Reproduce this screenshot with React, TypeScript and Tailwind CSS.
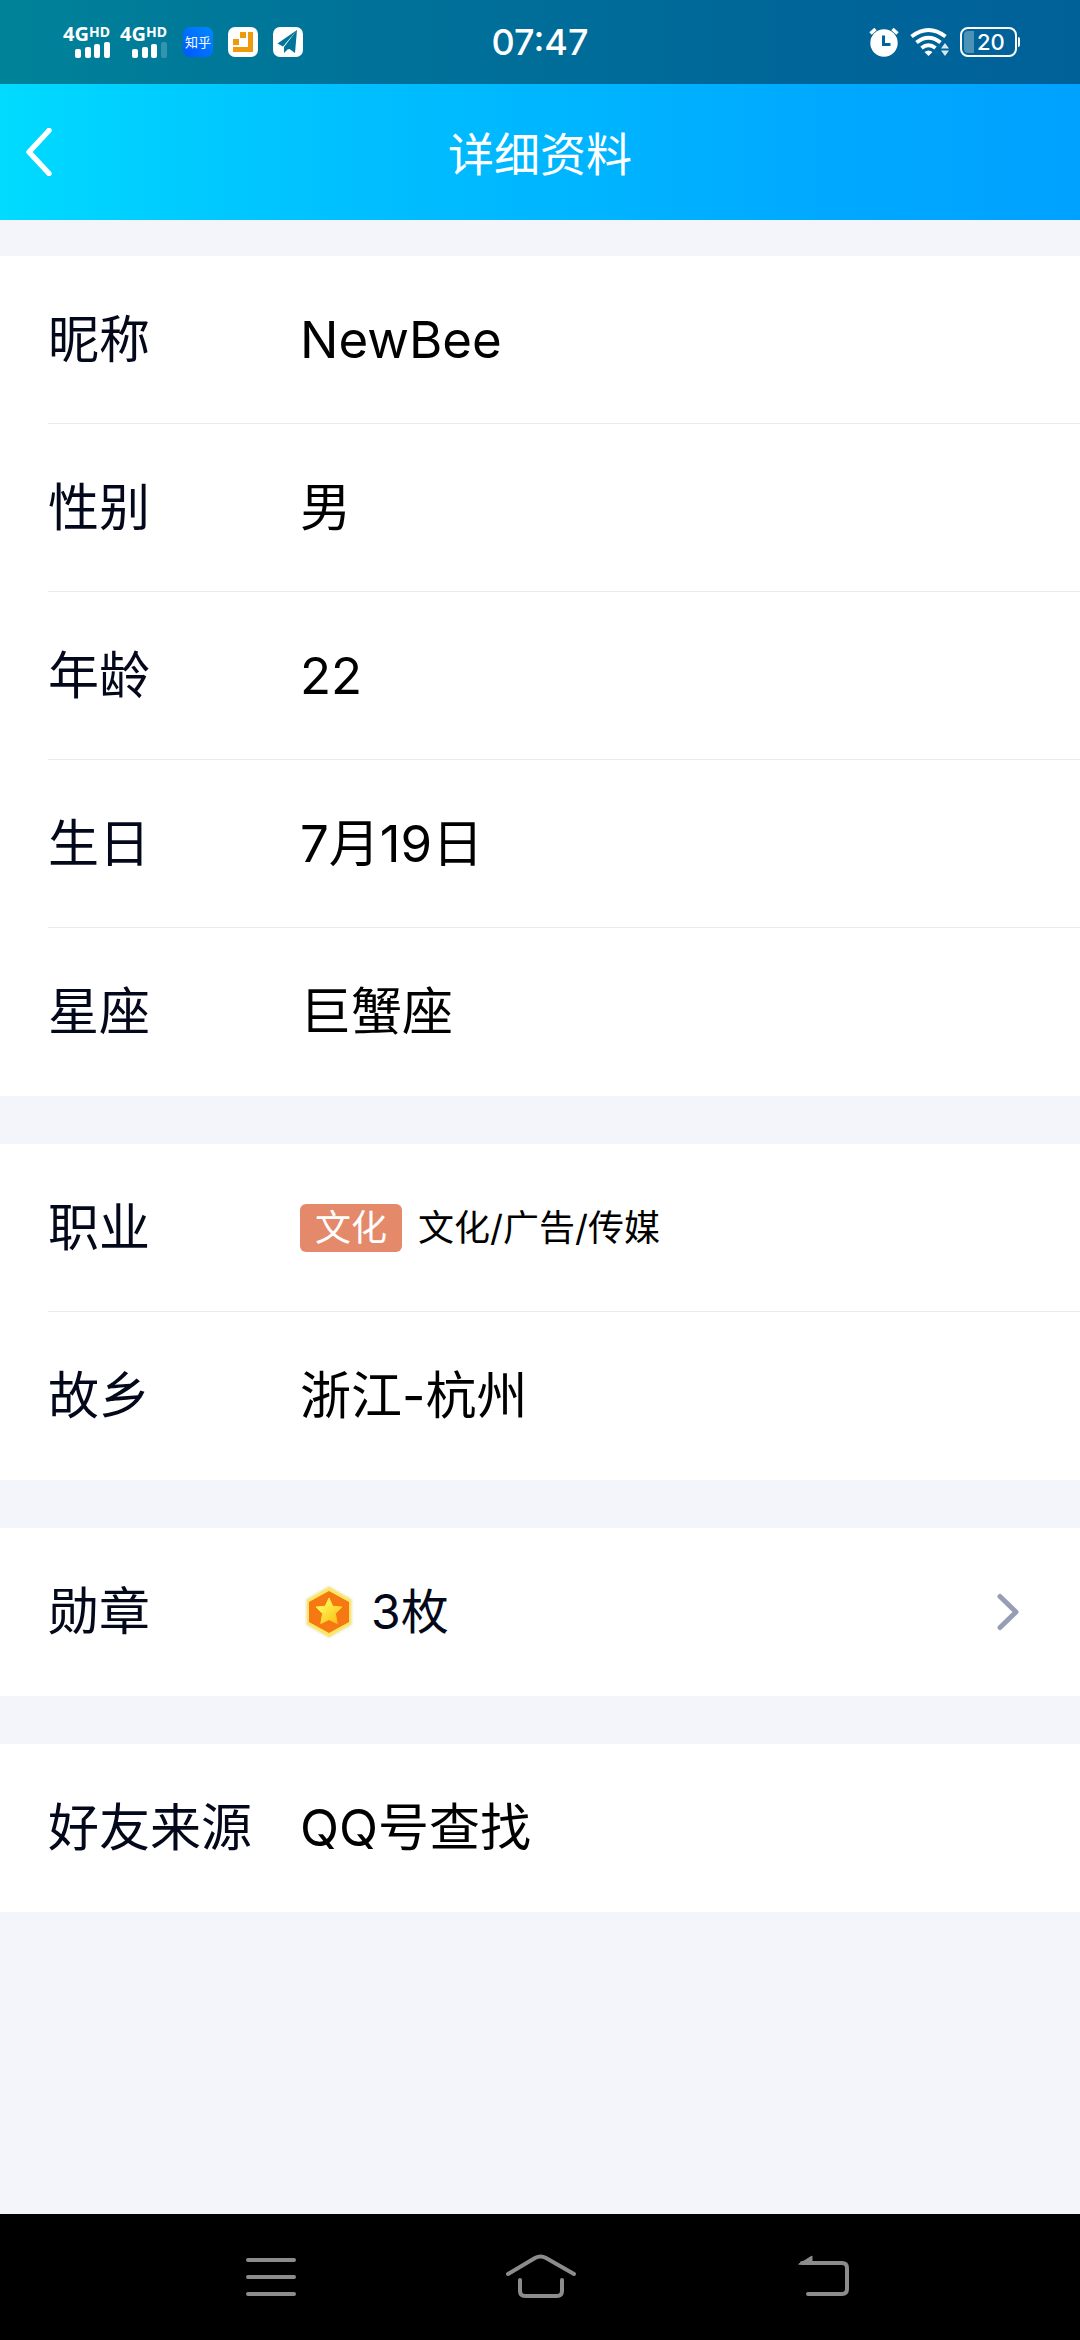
import type { ReactNode } from "react";

function SignalStatus({ faded = false }: { faded?: boolean }) {
  return (
    <div className="flex w-12 flex-col">
      <div className="flex h-4 items-start font-bold text-white">
        <span className="font-['Noto_Sans'] text-[20px] leading-4">4G</span>
        <span className="font-['Noto_Sans'] text-[14px] leading-3">HD</span>
      </div>
      <svg className="ml-3 h-4 w-9" viewBox="0 0 36 16" fill="#fff" aria-hidden="true">
        <rect x="0" y="7" width="6" height="9" rx="2" />
        <rect x="10" y="5" width="6" height="11" rx="2" />
        <rect x="19" y="2" width="6" height="14" rx="2" />
        <rect x="29" y="0" width="6" height="16" rx="2" opacity={faded ? 0.2 : 1} />
      </svg>
    </div>
  );
}

function BlocksIcon() {
  return (
    <svg className="size-[30px]" viewBox="0 0 30 30" aria-hidden="true">
      <rect width="30" height="30" rx="7" fill="#fff" />
      <path d="M12 5h6v6h-6zM5 12h6v6H5zM20 5h5v20H5v-5h15z" fill="#ef9a0c" />
    </svg>
  );
}

function PlaneIcon() {
  return (
    <svg className="size-[30px]" viewBox="0 0 30 30" aria-hidden="true">
      <rect width="30" height="30" rx="7" fill="#fff" />
      <path d="M24 3 4.500 16.500 10 19.500zM24 3 11 20v6l3.500-3.500 2-.5 5.500 4z" fill="#00759a" />
    </svg>
  );
}

function AlarmIcon() {
  return (
    <svg className="size-[30px]" viewBox="0 0 30 30" aria-hidden="true">
      <circle cx="15" cy="16" r="13.700" fill="#fff" />
      <path d="M1.500 6.500 6.500 2M28.500 6.500 23.500 2" stroke="#fff" strokeWidth="3.500" />
      <path d="M14.500 8.500v9h7" fill="none" stroke="#006699" strokeWidth="3" />
    </svg>
  );
}

function WifiIcon() {
  return (
    <svg className="h-[30px] w-10" viewBox="0 0 40 30" aria-hidden="true">
      <g fill="none" stroke="#fff" strokeWidth="4">
        <path d="M1.500 9.500Q18.500-3.500 35.500 9.500" />
        <path d="M6.500 15.500Q18.500 6 30.500 15.500" />
        <path d="M11.500 21Q18.500 15.500 25.500 21" />
      </g>
      <path d="M18.500 29 14.500 25Q18.500 22 22.500 25z" fill="#fff" />
      <path d="M35 16l4 5.500h-8zM35 29l-4-5.500h8z" fill="#fff" opacity=".85" />
    </svg>
  );
}

function Battery() {
  return (
    <div className="flex items-center gap-px">
      <div className="flex h-[30px] w-[57px] items-center gap-[3px] rounded-lg border-2 border-white pl-[2px]">
        <span className="h-[22px] w-[10px] rounded-l-sm bg-white/30" />
        <span className="text-[22px] leading-6 font-medium text-white">20</span>
      </div>
      <span className="h-[10px] w-[2px] rounded-r-sm bg-white" />
    </div>
  );
}

function StatusBar() {
  return (
    <div className="grid h-21 grid-cols-[1fr_auto_1fr] items-center bg-black/40">
      <div className="flex items-center pl-[63px]">
        <SignalStatus />
        <div className="ml-[9px]">
          <SignalStatus faded />
        </div>
        <div className="ml-[15px] flex gap-[15px]">
          <span className="flex size-[30px] items-center justify-center rounded-[7px] bg-linear-to-tr from-[#0055ff] to-[#0088ff] text-[13px] leading-4 whitespace-nowrap text-white">
            知乎
          </span>
          <BlocksIcon />
          <PlaneIcon />
        </div>
      </div>
      <time className="text-[36px] leading-10 font-medium text-white">07:47</time>
      <div className="flex items-center justify-end pr-[60px]">
        <AlarmIcon />
        <span className="ml-[11px] mr-[10px]">
          <WifiIcon />
        </span>
        <Battery />
      </div>
    </div>
  );
}

function TitleBar() {
  return (
    <div className="grid h-34 grid-cols-[1fr_auto_1fr] items-center">
      <button type="button" aria-label="返回" className="ml-6 w-8">
        <svg className="h-12 w-8" viewBox="0 0 32 48" fill="none" aria-hidden="true">
          <path d="M25 2.500 5 24 25 45.500" stroke="#fff" strokeWidth="5.500" strokeLinecap="round" strokeLinejoin="round" />
        </svg>
      </button>
      <h1 className="pt-1 text-[46px] leading-none font-normal text-white">详细资料</h1>
    </div>
  );
}

function Medal() {
  return (
    <svg className="h-[54px] w-[50px]" viewBox="0 0 50 54" aria-hidden="true">
      <defs>
        <linearGradient id="medal-star" x1="0" y1="0" x2="1" y2="1">
          <stop offset=".3" stopColor="#fff04e" />
          <stop offset=".9" stopColor="#fdbf18" />
        </linearGradient>
        <filter id="medal-glow" x="-20%" y="-20%" width="140%" height="140%">
          <feGaussianBlur stdDeviation="1" />
        </filter>
      </defs>
      <path d="M25 1 48 14v26L25 53 2 40V14z" fill="#e3dca0" opacity=".7" filter="url(#medal-glow)" />
      <path d="M25 2 47 15v24L25 52 3 39V15z" fill="#fbe765" />
      <path d="M25 6 45 17v20L25 48 5 37V17z" fill="#f57812" />
      <path
        d="M25 13 28.700 21.200 38 22 31.400 28.500 33.200 38.500 25 34.500 16.800 38.500 18.600 28.500 12 22 21.300 21.200z"
        fill="url(#medal-star)"
        stroke="url(#medal-star)"
        strokeLinejoin="round"
      />
    </svg>
  );
}

function Card({ children }: { children: ReactNode }) {
  return <dl className="bg-white pl-12">{children}</dl>;
}

function Row({ label, children }: { label: string; children: ReactNode }) {
  return (
    <div className="flex h-42 items-center border-b border-[#ebebed] text-[51px] leading-none last:border-transparent">
      <dt className="w-63 shrink-0 text-[#03081a]">{label}</dt>
      <dd className="flex flex-1 items-center text-black">{children}</dd>
    </div>
  );
}

function NavButton({ label, children }: { label: string; children: ReactNode }) {
  return (
    <button type="button" aria-label={label} className="flex flex-1 items-center justify-center">
      <svg
        className="h-15 w-20"
        viewBox="0 0 80 60"
        fill="none"
        stroke="#8c8c8c"
        strokeWidth="4"
        strokeLinecap="round"
        strokeLinejoin="round"
        aria-hidden="true"
      >
        {children}
      </svg>
    </button>
  );
}

export default function App() {
  return (
    <div className="flex min-h-screen flex-col bg-[#f4f5fa] font-['Inter','Noto_Sans_CJK_SC',sans-serif]">
      <header className="bg-[linear-gradient(to_right,#00dbff_0%,#00cbff_17%,#00bfff_33%,#00b4ff_55%,#00a8ff_78%,#00a2ff_100%)]">
        <StatusBar />
        <TitleBar />
      </header>

      <main className="flex flex-1 flex-col gap-12 pt-9">
        <Card>
          <Row label="昵称">NewBee</Row>
          <Row label="性别">男</Row>
          <Row label="年龄">22</Row>
          <Row label="生日">7月19日</Row>
          <Row label="星座">巨蟹座</Row>
        </Card>
        <Card>
          <Row label="职业">
            <span className="rounded-md bg-[#e5896b] px-[15px] text-[36px] leading-12 text-white">文化</span>
            <span className="ml-4 text-[36px] leading-12">文化/广告/传媒</span>
          </Row>
          <Row label="故乡">浙江-杭州</Row>
        </Card>
        <Card>
          <Row label="勋章">
            <button type="button" className="flex flex-1 items-center pr-[60px] pl-1 text-[#03081a]">
              <Medal />
              <span className="ml-[17px] text-[48px] leading-none">3枚</span>
              <svg className="ml-auto h-10 w-6" viewBox="0 0 24 40" fill="none" aria-hidden="true">
                <path d="M4 4.500 20 20 4 35.500" stroke="#979db5" strokeWidth="5" strokeLinecap="round" strokeLinejoin="round" />
              </svg>
            </button>
          </Row>
        </Card>
        <Card>
          <Row label="好友来源">QQ号查找</Row>
        </Card>
      </main>

      <nav className="flex h-[126px] bg-black px-[12.5%]">
        <NavButton label="菜单">
          <path d="M18 13h46M18 30h46M18 47h46" />
        </NavButton>
        <NavButton label="主页">
          <path d="M8 27 35 11Q40.500 8 46 11L74 27M20 33V44Q20 49 25 49H57Q62 49 62 44V33" />
        </NavButton>
        <NavButton label="后退">
          <path d="M32 16H72Q77 16 77 21V42Q77 47 72 47H38" />
          <path d="M29 17 42 9v8z" fill="#8c8c8c" strokeWidth="1" />
        </NavButton>
      </nav>
    </div>
  );
}
